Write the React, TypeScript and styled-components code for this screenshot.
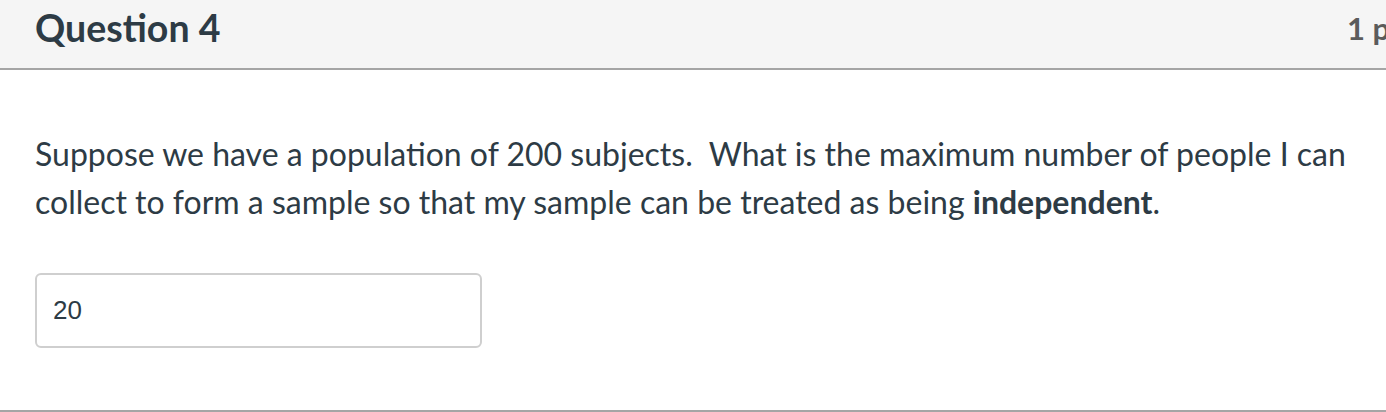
import * as React from "react";
import styled, { createGlobalStyle } from "styled-components";

const GlobalStyle = createGlobalStyle`
  html, body {
    margin: 0;
    padding: 0;
    background: #ffffff;
  }
  body {
    font-family: Lato, "Open Sans", sans-serif;
    color: #2d3b45;
    overflow: hidden;
  }
`;

const Card = styled.div`
  width: 1386px;
  height: 412px;
  box-sizing: border-box;
  border-bottom: 2px solid #a5a5a5;
  overflow: hidden;
`;

const Header = styled.div`
  height: 70px;
  box-sizing: border-box;
  background: #f5f5f5;
  border-bottom: 2px solid #a5a5a5;
  display: flex;
  align-items: center;
  justify-content: space-between;
  padding: 0 0 0 35px;
  white-space: nowrap;
`;

const Title = styled.h2`
  margin: 0 0 14px;
  font-size: 37.5px;
  font-weight: 700;
  color: #2d3b45;
`;

const Points = styled.div`
  margin: 0 -57px 12px 0;
  width: 96px;
  font-size: 31px;
  font-weight: 700;
  color: #5b5b5b;
`;

const Body = styled.div`
  padding: 60px 35px 0;
`;

const Text = styled.p`
  margin: 0;
  font-size: 32px;
  line-height: 48px;
  color: #2d3b45;

  strong {
    font-weight: 700;
  }
`;

const Answer = styled.input`
  display: block;
  margin-top: 47px;
  width: 447px;
  height: 75px;
  box-sizing: border-box;
  border: 2px solid #cfcfcf;
  border-radius: 6px;
  padding: 0 16px;
  font-family: "Liberation Sans", Arial, sans-serif;
  font-size: 26px;
  color: #2d3b45;
  background: #fff;
  outline: none;
`;

export default function App() {
  return (
    <>
      <GlobalStyle />
      <Card>
        <Header>
          <Title>Question 4</Title>
          <Points>1 pts</Points>
        </Header>
        <Body>
          <Text>
            Suppose we have a population of 200 subjects.&nbsp; What is the
            maximum number of people I can collect to form a sample so that my
            sample can be treated as being <strong>independent</strong>.
          </Text>
          <Answer type="text" defaultValue="20" readOnly />
        </Body>
      </Card>
    </>
  );
}
